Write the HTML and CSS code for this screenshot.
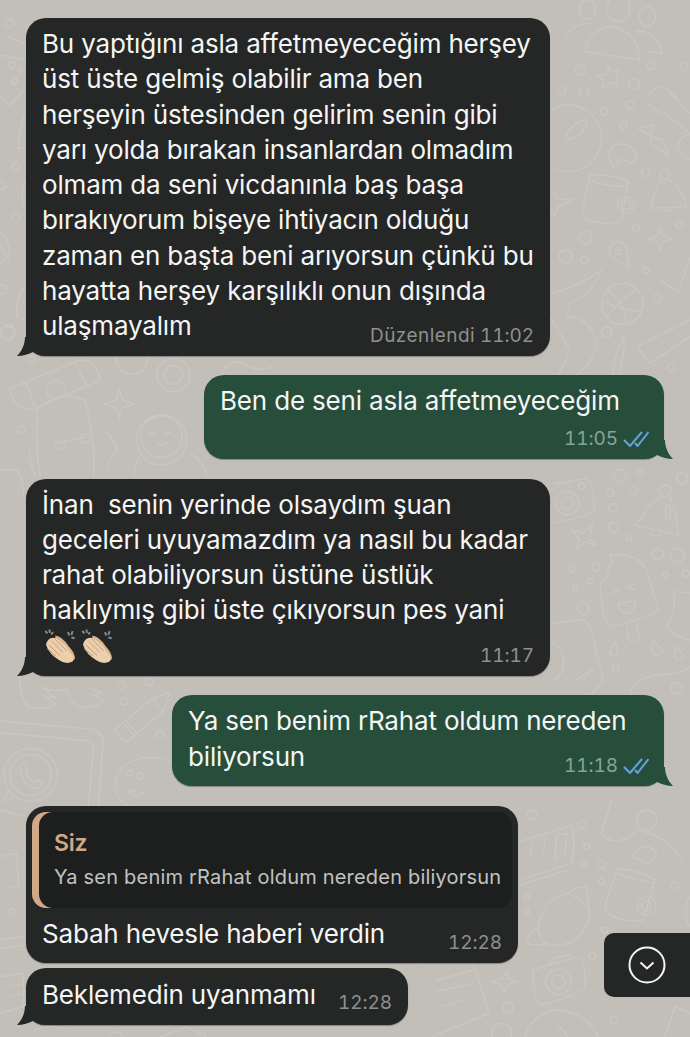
FILE: index.html
```html
<!doctype html>
<html lang="tr">
  <head>
    <title>Sohbet</title>
    <meta name="viewport" content="width = device-width, initial-scale = 1" />
    <link rel="stylesheet" href="styles.css">
  </head>
  <body>
    <svg class="wallpaper" viewBox="0 0 690 1037" aria-hidden="true">
      <!-- right column, top -->
      <g transform="translate(550 0) scale(0.3333)">
        <ellipse cx="112" cy="28" rx="24" ry="30" /><ellipse cx="205" cy="25" rx="35" ry="40" /><ellipse cx="292" cy="50" rx="24" ry="30" />
        <path d="M105 155 Q115 85 190 80 Q265 100 268 180Z M45 120 Q60 70 125 70 M255 95 Q320 85 335 160 L285 155" />
        <path d="M175 198 L182 218 L207 208 L198 235 L205 255 L180 248 L160 265 L160 240 L142 228 L165 222Z" />
        <circle cx="92" cy="210" r="16" /><circle cx="35" cy="272" r="12" /><circle cx="102" cy="276" r="14" /><circle cx="252" cy="253" r="16" /><circle cx="302" cy="197" r="11" /><circle cx="163" cy="334" r="11" /><circle cx="242" cy="315" r="12" /><circle cx="220" cy="376" r="11" /><circle cx="288" cy="517" r="13" /><circle cx="258" cy="685" r="10" /><circle cx="388" cy="674" r="10" /><circle cx="107" cy="713" r="19" /><circle cx="47" cy="770" r="20" /><circle cx="103" cy="781" r="11" /><circle cx="288" cy="811" r="9" /><circle cx="322" cy="893" r="11" /><circle cx="170" cy="997" r="16" /><circle cx="365" cy="1103" r="12" /><circle cx="402" cy="200" r="12" />
        <path d="M296 285 Q315 255 345 262 L382 295 M296 310 Q320 340 345 340 L420 400 M345 262 L420 340" />
        <path d="M265 385 L312 375 L300 410 L340 420 L355 465 L300 430 L305 410Z" />
        <path d="M190 505 Q160 450 205 432 Q250 430 260 470 Q250 500 225 480 Q200 475 190 505" />
        <circle cx="55" cy="415" r="100" /><path d="M45 415 Q65 365 112 360 Q105 410 50 420" /><circle cx="420" cy="440" r="36" />
        <path d="M120 525 Q180 520 235 545 L215 660 Q180 680 110 660 Q95 640 100 620Z M115 540 Q170 560 230 560" />
        <circle cx="228" cy="615" r="25" /><circle cx="228" cy="615" r="14" />
        <circle cx="345" cy="525" r="14" /><path d="M335 540 Q310 570 305 625 L410 620 Q395 560 355 540 M345 630 Q360 640 372 625" />
        <path d="M332 682 L340 708 L368 716 L340 724 L332 752 L324 724 L296 716 L324 708Z M12 565 L18 595 L65 600 L25 620 L12 650 L0 625" />
        <path d="M205 725 Q175 730 180 765 L235 805 Q240 730 205 725Z" /><circle cx="205" cy="755" r="8" />
        <circle cx="217" cy="912" r="62" /><path d="M170 872 Q225 900 230 970 M260 868 Q205 905 172 950 M160 905 Q215 930 275 935" />
        <path d="M330 840 L385 875 L420 770 M262 1040 L420 960 M300 1090 L420 1010 M262 1040 Q280 1070 300 1090" />
        <path d="M0 880 Q90 860 152 812 Q130 880 60 910 L50 950 Q120 950 140 1030 Q130 1090 80 1125 M190 1125 Q190 1060 222 1012 Q225 1070 205 1125 M0 950 L60 1050 L25 1125" />
      </g>

      <!-- right column, middle -->
      <g transform="translate(550 460) scale(0.3333)">
        <path d="M10 70 L110 55 Q130 60 133 150 Q120 170 0 190 M25 75 L60 68" />
        <circle cx="52" cy="130" r="35" /><circle cx="52" cy="130" r="18" /><circle cx="95" cy="78" r="9" />
        <circle cx="210" cy="47" r="19" /><circle cx="270" cy="37" r="9" /><circle cx="397" cy="55" r="17" /><circle cx="180" cy="98" r="11" /><circle cx="250" cy="93" r="11" /><circle cx="188" cy="143" r="12" /><circle cx="190" cy="202" r="15" /><circle cx="236" cy="235" r="8" /><circle cx="324" cy="282" r="17" /><circle cx="382" cy="285" r="21" /><circle cx="347" cy="345" r="8" /><circle cx="408" cy="340" r="10" /><circle cx="68" cy="326" r="10" /><circle cx="138" cy="322" r="12" /><circle cx="120" cy="363" r="8" /><circle cx="77" cy="387" r="8" /><circle cx="100" cy="445" r="17" /><circle cx="197" cy="627" r="10" />
        <circle cx="346" cy="92" r="17" />
        <path d="M340 110 Q290 130 280 165 Q270 185 250 195 L385 225 Q375 140 360 110 M298 215 Q315 240 335 220 M350 135 L345 175 L360 175 L362 135Z" />
        <path d="M128 195 L118 235 L138 258 L105 245 L78 268 L88 235 L62 208 L100 220Z" />
        <path d="M180 285 Q260 275 290 330 L325 450 Q300 470 185 500 Q165 490 160 460 L150 370 Q185 350 170 325 Q195 310 180 285Z" />
        <path d="M230 500 L235 535 Q255 560 268 535 L260 490 M182 382 L205 392 L185 400 M255 370 L232 382 L255 390 M205 432 L255 420 Q255 460 230 460 Q210 460 205 432Z" />
        <path d="M197 548 Q175 570 180 582 Q195 595 205 580Z M310 542 Q300 570 315 585 Q335 590 338 570Z M382 560 Q370 585 378 595 Q395 605 402 590Z" />
        <path d="M0 490 L100 478 Q125 490 135 560 L160 660 Q140 690 120 705 M0 545 A55 62 0 0 1 0 665 M80 660 L130 625 M100 660 L122 635" />
        <path d="M240 705 Q245 660 320 645 Q400 640 420 620 M372 395 L420 400 M372 395 Q380 450 350 500 Q370 530 420 540" />
        <circle cx="380" cy="685" r="17" />
      </g>

      <!-- left side, under the third bubble -->
      <g transform="translate(0 676) scale(0.3333)">
        <path d="M60 0 Q55 70 90 95 Q140 105 165 85 L135 60 L165 65 L125 30 Q140 50 200 40 Q210 85 250 95 Q295 95 312 70 L280 60 L305 50 L260 32" />
        <circle cx="365" cy="30" r="11" /><circle cx="372" cy="76" r="11" /><circle cx="447" cy="18" r="11" /><circle cx="480" cy="178" r="13" />
        <path d="M345 160 L460 65 L510 50 L490 105 L385 195 Q360 195 345 160Z M368 142 L405 180 M378 135 L412 172 M460 65 Q470 95 490 105" />
        <path d="M0 135 L280 160 Q305 170 310 195 L295 390 M0 170 L270 195 Q285 205 280 220 L265 390" />
        <circle cx="92" cy="297" r="80" /><circle cx="92" cy="297" r="62" />
        <path d="M60 270 Q65 262 75 262 L85 285 L78 295 Q90 315 105 320 L118 310 L128 322 Q118 340 100 335 Q60 318 60 270Z M25 345 L10 375 L50 362" />
        <path d="M345 330 Q350 260 430 245 Q500 240 516 260 M345 330 Q350 370 385 390" />
        <circle cx="390" cy="292" r="9" /><circle cx="420" cy="300" r="9" /><path d="M385 340 L430 352 Q405 375 385 340Z" />
      </g>

      <!-- left side, between first bubbles -->
      <g transform="translate(0 300) scale(0.3333)">
        <circle cx="22" cy="100" r="22" /><circle cx="95" cy="180" r="11" /><circle cx="64" cy="390" r="11" />
        <path d="M30 265 L240 180 Q290 180 300 240 L95 330 Q35 325 30 265Z M75 245 L105 320 M225 190 L262 262" />
        <circle cx="168" cy="270" r="28" />
        <path d="M110 335 Q170 265 255 300 Q290 440 280 530 M112 335 Q105 430 120 530 M170 430 L260 410 M310 390 Q350 420 350 450 L320 500 M90 450 Q85 490 110 530 M0 510 L50 510 Q70 530 70 590" />
        <circle cx="180" cy="435" r="14" /><circle cx="255" cy="415" r="14" />
        <path d="M358 268 L368 300 L402 312 L368 322 L358 352 L348 322 L314 312 L348 300Z" />
        <circle cx="485" cy="420" r="75" /><circle cx="485" cy="410" r="62" />
        <path d="M445 405 Q458 390 470 405 M495 405 Q508 390 520 405 M468 425 Q485 445 502 425 M400 530 Q405 490 420 470 M620 530 Q610 480 570 460" />
        <circle cx="395" cy="175" r="48" /><circle cx="520" cy="225" r="50" /><circle cx="520" cy="225" r="28" />
        <path d="M660 230 Q690 170 730 190 Q770 220 820 200" />
      </g>

      <!-- left strip, top -->
      <g transform="translate(0 0) scale(0.3333)">
        <circle cx="28" cy="70" r="13" /><circle cx="35" cy="195" r="9" /><circle cx="60" cy="210" r="6" /><circle cx="44" cy="243" r="9" /><circle cx="47" cy="500" r="11" /><circle cx="47" cy="652" r="12" /><circle cx="8" cy="868" r="13" /><circle cx="25" cy="995" r="20" />
        <path d="M20 110 L75 130 L78 180 L0 165 M0 290 L30 315 L70 270 M75 340 Q60 380 55 445 L78 445 M0 540 L20 560 L0 570 M78 540 Q60 560 70 620 M0 700 Q25 710 30 760 L0 790 M0 730 L30 790 M78 850 Q45 900 50 950 L78 960" />
      </g>

      <!-- bottom left and right -->
      <g transform="translate(0 800) scale(0.3333)">
        <circle cx="35" cy="335" r="8" />
        <path d="M0 30 L70 50 M0 170 L50 160 L55 260 L25 260 M0 420 L75 410 M0 445 L75 435 M0 530 L70 520 L70 620 L0 640 M30 560 L70 550 M30 590 L70 580" />
        <path d="M100 690 Q160 670 200 690 M330 710 A20 14 0 0 1 370 710 M480 711 L560 680 L620 711" />
      </g>
      <g transform="translate(345 800) scale(0.3333)">
        <path d="M525 125 L680 75 Q695 130 680 190 L530 240 M525 255 L670 210" />
        <path d="M560 130 L555 170 M600 115 L595 160 M635 105 L665 100 L660 165 L630 175Z" />
        <circle cx="560" cy="45" r="15" /><circle cx="712" cy="74" r="12" /><circle cx="725" cy="140" r="9" /><circle cx="770" cy="193" r="12" /><circle cx="715" cy="190" r="9" /><circle cx="770" cy="245" r="9" /><circle cx="988" cy="258" r="11" /><circle cx="742" cy="468" r="10" /><circle cx="780" cy="390" r="9" /><circle cx="806" cy="660" r="10" /><circle cx="488" cy="622" r="16" /><circle cx="545" cy="290" r="8" /><circle cx="545" cy="335" r="8" />
        <path d="M770 100 Q790 30 800 0 M770 100 Q810 150 880 90 Q970 110 1010 180 M860 175 Q880 120 930 150 Q945 180 900 190 Q880 170 860 175M905 30a30 30 0 1 0 .1 0Z" />
        <path d="M818 205 Q880 210 930 240 L895 360 Q830 370 790 340 Q775 320 785 300Z M815 220 Q870 240 925 250" />
        <circle cx="905" cy="318" r="28" /><circle cx="905" cy="318" r="15" />
        <path d="M590 345 Q610 290 670 280 Q720 300 735 340 L725 260 Q690 260 670 280 M590 345 Q570 380 590 420 Q630 450 680 425 Q725 400 735 340 M590 380 Q540 400 550 430 Q580 440 605 430" />
        <path d="M565 510 L700 470 Q725 490 720 560 Q715 580 590 615 Q565 610 565 510Z M610 495 L625 475 L670 465 L680 480" />
        <circle cx="640" cy="545" r="38" /><circle cx="640" cy="545" r="20" />
        <path d="M490 510 L486 535 L520 545 L486 555 L478 580 L470 555 L440 545 L470 535Z" />
        <path d="M225 490 L380 470 L432 640 L260 711 M275 540 L385 510 M275 575 L385 550 M290 620 L355 600" />
        <path d="M540 711 Q560 640 640 630 Q730 640 760 711 M640 675 L670 711 M960 711 L990 620 L1035 640 M1035 290 Q1010 340 1035 380" />
        <circle cx="470" cy="700" r="30" />
      </g>
    </svg>

    <div class="chat">
      <div class="bubble in wide">
        <p class="text">Bu yaptığını asla affetmeyeceğim herşey<br>üst üste gelmiş olabilir ama ben<br>herşeyin üstesinden gelirim senin gibi<br>yarı yolda bırakan insanlardan olmadım<br>olmam da seni vicdanınla baş başa<br>bırakıyorum bişeye ihtiyacın olduğu<br>zaman en başta beni arıyorsun çünkü bu<br>hayatta herşey karşılıklı onun dışında<br>ulaşmayalım</p>
        <div class="meta overlap"><span class="time"><span class="edited">Düzenlendi</span> 11:02</span></div>
        <svg class="tail tail-in" viewBox="0 0 25 19"><path d="M8 0 C8 7 5 14 0 19 C6 19 12 17 16 15 C19 17 22 18 25 19 V0Z" /></svg>
      </div>

      <div class="bubble out first-out">
        <p class="text">Ben de seni asla affetmeyeceğim</p>
        <div class="meta">
          <span class="time">11:05</span>
          <svg class="ticks" viewBox="0 0 26 16"><path d="M1 9 L7 15 L19 1 M12 12 L14.5 15 L25.5 1" /></svg>
        </div>
        <svg class="tail tail-out" viewBox="0 0 25 19"><path d="M17 0 C17 7 20 14 25 19 C19 19 13 17 9 15 C6 17 3 18 0 19 V0Z" /></svg>
      </div>

      <div class="bubble in wide">
        <p class="text">İnan&nbsp; senin yerinde olsaydım şuan<br>geceleri uyuyamazdım ya nasıl bu kadar<br>rahat olabiliyorsun üstüne üstlük<br>haklıymış gibi üste çıkıyorsun pes yani</p>
        <div class="meta emoji-row">
          <div class="claps">
            <svg class="clap" viewBox="20 8 105 107">
              <g id="clap-hands">
                <path class="hand-back" d="M60 30 Q80 32 100 62 Q122 85 118 102 Q100 112 85 105 L60 60Z" />
                <path class="hand-front" d="M32 58 Q38 32 62 38 Q92 55 104 80 Q120 95 112 108 Q92 118 72 104 Q42 88 32 58Z" />
                <path class="fingers" d="M48 46 L82 80 M58 40 L94 76 M40 58 L74 90 M36 70 L62 92" />
                <path class="spark" d="M30 16 L36 24 M42 12 L44 22 M53 20 L48 27 M98 20 L102 30 M112 17 L108 28 M118 38 L108 36" />
              </g>
            </svg>
            <svg class="clap" viewBox="20 8 105 107">
              <use href="#clap-hands" />
            </svg>
          </div>
          <span class="time">11:17</span>
        </div>
        <svg class="tail tail-in" viewBox="0 0 25 19"><path d="M8 0 C8 7 5 14 0 19 C6 19 12 17 16 15 C19 17 22 18 25 19 V0Z" /></svg>
      </div>

      <div class="bubble out second-out">
        <p class="text">Ya sen benim rRahat oldum nereden<br>biliyorsun</p>
        <div class="meta overlap">
          <span class="time">11:18</span>
          <svg class="ticks" viewBox="0 0 26 16"><path d="M1 9 L7 15 L19 1 M12 12 L14.5 15 L25.5 1" /></svg>
        </div>
        <svg class="tail tail-out" viewBox="0 0 25 19"><path d="M17 0 C17 7 20 14 25 19 C19 19 13 17 9 15 C6 17 3 18 0 19 V0Z" /></svg>
      </div>

      <div class="group">
        <div class="bubble in reply-bubble">
          <div class="reply">
            <div class="reply-name">Siz</div>
            <div class="reply-text">Ya sen benim rRahat oldum nereden biliyorsun</div>
          </div>
          <p class="text">Sabah hevesle haberi verdin</p>
          <div class="meta overlap"><span class="time">12:28</span></div>
        </div>

        <div class="bubble in last">
          <div class="inline-row">
            <p class="text">Beklemedin uyanmamı</p>
            <span class="time">12:28</span>
          </div>
          <svg class="tail tail-in" viewBox="0 0 25 19"><path d="M8 0 C8 7 5 14 0 19 C6 19 12 17 16 15 C19 17 22 18 25 19 V0Z" /></svg>
        </div>
      </div>
    </div>

    <div class="scroll-down">
      <svg viewBox="0 0 38 38"><circle cx="19" cy="19" r="17.5" /><path d="M12.5 16.5 L19 22.5 L25.5 16.5" /></svg>
    </div>
  </body>
</html>
```

FILE: styles.css
```css
html,
body {
  height: 100%;
  margin: 0;
  overflow: hidden;
  background-color: #c2bfb9;
}

body {
  position: relative;
  font-family: Inter, "Liberation Sans", sans-serif;
  color: #f4f5f4;
}

.wallpaper {
  position: absolute;
  top: 0;
  left: 0;
  width: 690px;
  height: 1037px;
  fill: none;
  stroke: #cac7c2;
  stroke-width: 4;
}

.chat {
  position: relative;
  display: flex;
  flex-direction: column;
  gap: 19.8px;
  padding: 18px 26px 0;
}

.group {
  display: flex;
  flex-direction: column;
  gap: 5px;
}

.bubble {
  position: relative;
  box-sizing: border-box;
  padding: 8px 16px 0;
  border-radius: 20px;
  box-shadow: 0 1px 1px rgba(0, 0, 0, 0.3);
}

.in {
  align-self: flex-start;
  background-color: #252726;
  fill: #252726;
}

.out {
  align-self: flex-end;
  padding-right: 15px;
  background-color: #264e3b;
  fill: #264e3b;
}

.wide {
  width: 524px;
}

.first-out {
  width: 460px;
}

.second-out {
  width: 492px;
}

.text {
  margin: 0;
  font-size: 26px;
  line-height: 35.3px;
  letter-spacing: -0.17px;
  white-space: nowrap;
}

.time {
  font-size: 19px;
  line-height: 24px;
  letter-spacing: -0.1px;
  font-feature-settings: "tnum";
  color: #8e908e;
}

.edited {
  letter-spacing: 0.45px;
}

.out .time {
  color: #85a596;
}

.meta {
  display: flex;
  justify-content: flex-end;
  align-items: center;
  gap: 5px;
  height: 40px;
}

.meta.overlap {
  margin-top: -28px;
}

.ticks {
  width: 26px;
  height: 16px;
  fill: none;
  stroke: #64a3dd;
  stroke-width: 2;
}

.tail {
  position: absolute;
  bottom: 0;
  width: 25px;
  height: 19px;
}

.tail-in {
  left: -9px;
}

.tail-out {
  right: -9px;
}

.emoji-row {
  justify-content: space-between;
  align-items: flex-start;
  height: 47.8px;
}

.emoji-row .time {
  margin-top: 16px;
}

.claps {
  display: flex;
  gap: 2px;
}

.clap {
  width: 35px;
  height: 36px;
}

.hand-back {
  fill: #d9b58e;
}

.hand-front {
  fill: #eccfac;
}

.fingers {
  fill: none;
  stroke: #c69f7a;
  stroke-width: 3;
}

.spark {
  fill: none;
  stroke: #868b8d;
  stroke-width: 6;
}

.reply-bubble {
  width: 492px;
  padding: 6px 6px 0;
}

.reply-bubble .text {
  padding: 8px 10px 0;
}

.reply-bubble .meta {
  padding-right: 10px;
}

.reply {
  box-sizing: border-box;
  height: 96px;
  padding: 17px 10px 0 22px;
  border-radius: 14px;
  background-color: #1d1f1e;
  box-shadow: inset 7px 0 0 #d2a988;
}

.reply-name {
  font-size: 23px;
  line-height: 28px;
  font-weight: 600;
  letter-spacing: -0.2px;
  color: #d2a988;
}

.reply-text {
  margin-top: 8px;
  font-size: 20px;
  line-height: 24px;
  letter-spacing: 0.2px;
  color: #c2c3c1;
  white-space: nowrap;
}

.last {
  width: 382px;
  height: 57px;
  padding-top: 9px;
}

.inline-row {
  display: flex;
  justify-content: space-between;
  align-items: flex-end;
}

.inline-row .time {
  margin-bottom: -3px;
}

.scroll-down {
  position: absolute;
  top: 933px;
  right: 0;
  width: 86px;
  height: 64px;
  display: flex;
  align-items: center;
  justify-content: center;
  border-radius: 10px 0 0 10px;
  background-color: #252726;
}

.scroll-down svg {
  width: 38px;
  height: 38px;
  fill: none;
  stroke: #f4f5f4;
  stroke-width: 2;
}
```
